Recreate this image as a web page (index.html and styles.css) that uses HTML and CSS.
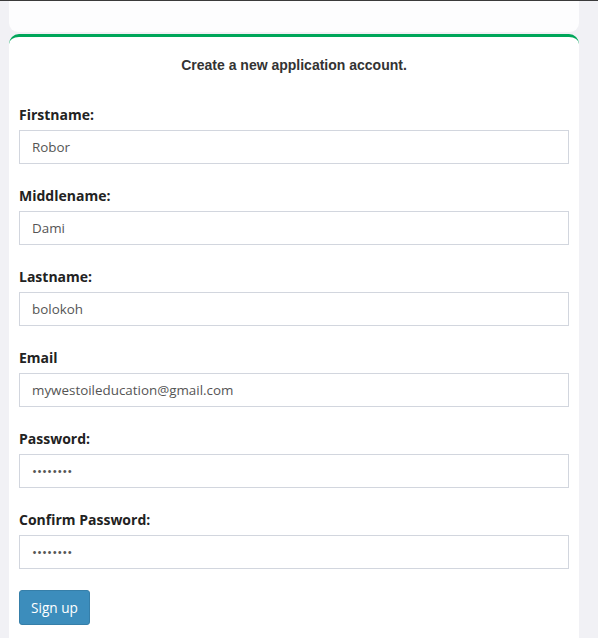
FILE: index.html
```html
<!DOCTYPE html>
<html>
<head>
<meta charset="utf-8">
<link rel="stylesheet" href="styles.css">
</head>
<body>
<div class="topline"></div>
<div class="page">
  <div class="card-top"></div>
  <div class="card">
    <h3 class="title">Create a new application account.</h3>
    <form class="form">
      <div class="group">
        <label class="label">Firstname:</label>
        <input class="input" type="text" value="Robor">
      </div>
      <div class="group">
        <label class="label">Middlename:</label>
        <input class="input" type="text" value="Dami">
      </div>
      <div class="group">
        <label class="label">Lastname:</label>
        <input class="input" type="text" value="bolokoh">
      </div>
      <div class="group">
        <label class="label">Email</label>
        <input class="input" type="text" value="mywestoileducation@gmail.com">
      </div>
      <div class="group">
        <label class="label">Password:</label>
        <input class="input" type="password" value="password">
      </div>
      <div class="group last">
        <label class="label">Confirm Password:</label>
        <input class="input" type="password" value="password">
      </div>
      <button class="btn" type="button">Sign up</button>
    </form>
  </div>
</div>
</body>
</html>
```
FILE: styles.css
```css
html, body {
  margin: 0;
  padding: 0;
  background: #f1f1f5;
  height: 100%;
  overflow: hidden;
}
body {
  font-family: "Open Sans", "Noto Sans", sans-serif;
  color: #333;
}
.topline {
  height: 1px;
  background: #3b3b3b;
}
.page {
  padding: 0 19px 0 9px;
}
.card-top {
  height: 31px;
  background: #fdfdfe;
  border-radius: 0 0 9px 9px;
}
.card {
  box-sizing: border-box;
  margin-top: 2px;
  background: #fff;
  border-top: 3px solid #00a65a;
  border-radius: 10px 10px 0 0;
  padding: 0 10px;
  height: 604px;
}
.title {
  margin: 0;
  padding-top: 17px;
  text-align: center;
  font-family: "Liberation Sans", Arial, sans-serif;
  font-weight: bold;
  font-size: 14px;
  line-height: 22px;
  color: #333;
}
.form {
  display: flex;
  flex-direction: column;
  padding-top: 29px;
}
.group {
  display: flex;
  flex-direction: column;
  margin-bottom: 22px;
}
.group.last {
  margin-bottom: 21px;
}
.label {
  font-weight: 700;
  font-size: 14px;
  line-height: 20px;
  margin-bottom: 5px;
  color: #222;
}
.input {
  box-sizing: border-box;
  height: 34px;
  width: 100%;
  border: 1px solid #d2d6de;
  border-radius: 0;
  padding: 0 12px;
  font-family: "Open Sans", "Noto Sans", sans-serif;
  font-size: 13.4px;
  color: #555;
  background: #fff;
  outline: none;
  margin: 0;
}
.btn {
  align-self: flex-start;
  height: 35px;
  padding: 0 11px;
  background: #3c8dbc;
  border: 1px solid #367fa9;
  border-radius: 3px;
  color: #fff;
  font-family: "Open Sans", "Noto Sans", sans-serif;
  font-size: 13.6px;
}
```
